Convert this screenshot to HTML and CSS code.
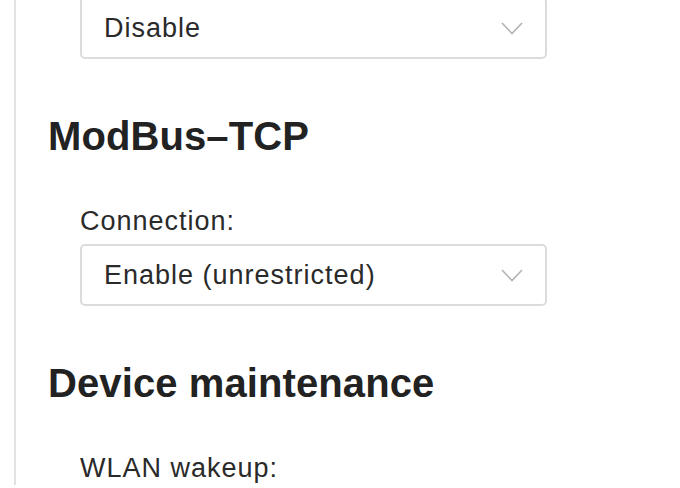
FILE: index.html
```html
<!DOCTYPE html>
<html lang="en">
<head>
    <meta charset="UTF-8">
    <meta name="viewport" content="width=device-width, initial-scale=1.0">
    <title>Settings</title>
    <link rel="stylesheet" href="styles.css">
</head>
<body>
    <div class="panel">
        <div class="field">
            <div class="select">
                <span>Disable</span>
                <svg class="chevron" width="22" height="13" viewBox="0 0 22 13"><polyline points="1,1 11,11.5 21,1" fill="none" stroke="#b3b3b3" stroke-width="1.6"/></svg>
            </div>
        </div>

        <h2>ModBus&#8211;TCP</h2>
        <div class="field">
            <label>Connection:</label>
            <div class="select">
                <span>Enable (unrestricted)</span>
                <svg class="chevron" width="22" height="13" viewBox="0 0 22 13"><polyline points="1,1 11,11.5 21,1" fill="none" stroke="#b3b3b3" stroke-width="1.6"/></svg>
            </div>
        </div>

        <h2>Device maintenance</h2>
        <div class="field">
            <label>WLAN wakeup:</label>
        </div>
    </div>
</body>
</html>
```

FILE: styles.css
```css
body {
    font-family: "Liberation Sans", Arial, sans-serif;
    background-color: #fff;
    color: #222;
    margin: 0;
    padding: 0;
    overflow: hidden;
}

.panel {
    margin-left: 14px;
    margin-top: -3px;
    min-height: 100vh;
    border-left: 2px solid #e2e2e2;
    padding-left: 32px;
}

h2 {
    font-size: 40px;
    line-height: 48px;
    font-weight: bold;
    color: #222;
    margin: 53px 0 45px 0;
    letter-spacing: 0.1px;
}

.field {
    margin-left: 32px;
    width: 467px;
}

label {
    display: block;
    font-size: 27px;
    line-height: 32px;
    letter-spacing: 1px;
    color: #2a2a2a;
    margin-bottom: 7px;
}

.select {
    box-sizing: border-box;
    height: 62px;
    border: 2px solid #dcdcdc;
    border-radius: 5px;
    display: flex;
    align-items: center;
    justify-content: space-between;
    padding: 0 22px 0 22px;
    font-size: 27px;
    letter-spacing: 1px;
    color: #2a2a2a;
}

.chevron {
    display: block;
}
```
